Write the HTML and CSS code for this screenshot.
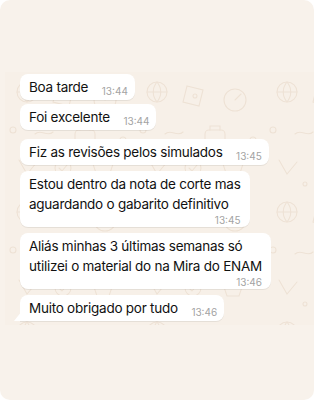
FILE: index.html
```html
<!DOCTYPE html>
<html lang="pt">
<head>
  <meta charset="UTF-8">
  <meta name="viewport" content="width=device-width, initial-scale=1.0">
  <title>Conversa</title>
  <link rel="stylesheet" href="styles.css">
</head>
<body>
  <div class="frame">
    <div class="band"></div>

    <div class="chat">
      <div class="bubble">
        <span class="text">Boa tarde</span>
        <span class="time">13:44</span>
      </div>
      <div class="bubble">
        <span class="text">Foi excelente</span>
        <span class="time">13:44</span>
      </div>
      <div class="bubble gap">
        <span class="text">Fiz as revisões pelos simulados</span>
        <span class="time">13:45</span>
      </div>
      <div class="bubble multi">
        <div class="text">Estou dentro da nota de corte mas<br>aguardando o gabarito definitivo</div>
        <div class="time">13:45</div>
      </div>
      <div class="bubble multi">
        <div class="text">Aliás minhas 3 últimas semanas só<br>utilizei o material do na Mira do ENAM</div>
        <div class="time">13:46</div>
      </div>
      <div class="bubble tail">
        <span class="text">Muito obrigado por tudo</span>
        <span class="time">13:46</span>
      </div>
    </div>

    <div class="band bottom"></div>
  </div>
</body>
</html>
```

FILE: styles.css
```css
body {
  margin: 0;
  background-color: #ffffff;
  font-family: Inter, 'Liberation Sans', Arial, sans-serif;
}

.frame {
  width: 314px;
  height: 400px;
  border-radius: 10px;
  background-color: #f8f2eb;
  overflow: hidden;
  display: flex;
  flex-direction: column;
}

.band {
  height: 72px;
}

.band.bottom {
  flex: 1;
}

.chat {
  height: 253px;
  margin-left: 5px;
  padding: 2px 0 0 15px;
  box-sizing: border-box;
  background-color: #f7f0e8;
  background-image: url("data:image/svg+xml,%3Csvg xmlns='http://www.w3.org/2000/svg' width='130' height='120' fill='none' stroke='%23eee2d5' stroke-width='1.1' stroke-linecap='round'%3E%3Ccircle cx='22' cy='20' r='10'/%3E%3Cpath d='M12 20h20M22 10c-5 6-5 14 0 20M22 10c5 6 5 14 0 20'/%3E%3Cpath d='M52 14l16 4-4 16-16-4z'/%3E%3Ccircle cx='60' cy='24' r='2'/%3E%3Ccircle cx='100' cy='28' r='11'/%3E%3Cpath d='M100 28l6-6'/%3E%3Ccircle cx='8' cy='58' r='3'/%3E%3Cpath d='M30 62c6-6 12 4 18-2'/%3E%3Crect x='70' y='58' width='20' height='15' rx='4'/%3E%3Cpath d='M75 58v-4h10v4'/%3E%3Ccircle cx='118' cy='68' r='3'/%3E%3Cpath d='M14 88l8 14 10-12'/%3E%3Ccircle cx='58' cy='96' r='8'/%3E%3Cpath d='M54 96l3 3 5-6'/%3E%3Cpath d='M88 92h20l-4 12h-12z'/%3E%3Ccircle cx='40' cy='112' r='2'/%3E%3C/svg%3E");
  display: flex;
  flex-direction: column;
  align-items: flex-start;
  gap: 4px;
}

.bubble {
  position: relative;
  height: 26px;
  box-sizing: border-box;
  background-color: #ffffff;
  border-radius: 8px;
  padding: 3px 7px 3px 9px;
  font-size: 13.5px;
  letter-spacing: -0.25px;
  line-height: 20px;
  color: #111111;
  white-space: nowrap;
  box-shadow: 0 1px 0.5px rgba(0, 0, 0, 0.07);
}

.bubble .time {
  position: relative;
  top: 3px;
  font-size: 10px;
  letter-spacing: 0;
  color: #a3a3a3;
  margin-left: 10px;
}

.bubble.gap {
  margin-top: 5px;
}

.bubble.multi {
  height: 56px;
  margin-top: 2px;
  padding: 3px 9px 1px 9px;
}

.bubble.multi .time {
  top: 0;
  margin-left: 0;
  line-height: 12px;
  text-align: right;
}

.bubble.multi + .bubble {
  margin-top: 2px;
}

.bubble.tail {
  border-bottom-left-radius: 0;
}

.bubble.tail::before {
  content: '';
  position: absolute;
  left: -6px;
  bottom: 0;
  width: 8px;
  height: 10px;
  background-color: #ffffff;
  clip-path: polygon(0 100%, 100% 0, 100% 100%);
}
```
